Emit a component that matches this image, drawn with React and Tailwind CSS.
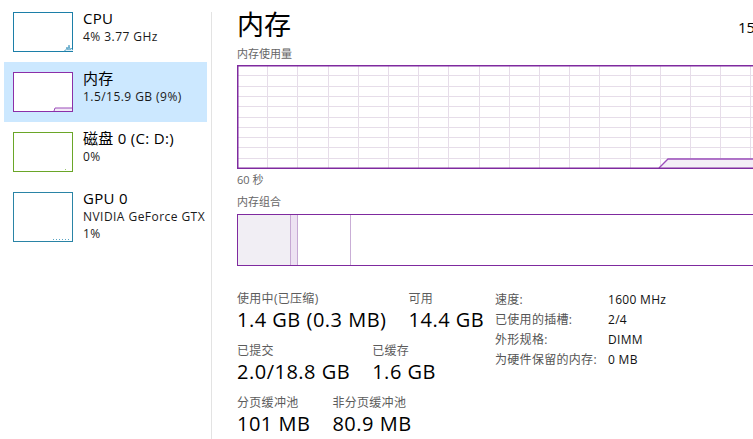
const font = { fontFamily: '"Open Sans", "Noto Sans CJK SC", sans-serif' };

function Thumb({ color, h = 40, children }) {
  return (
    <svg width="60" height={h} className="shrink-0 block">
      <rect x="0.5" y="0.5" width="59" height={h - 1} fill="#fff" stroke={color} strokeWidth="1" />
      {children}
    </svg>
  );
}

function SideItem({ thumb, title, lines, selected }) {
  return (
    <div
      className={`flex ml-[4px] w-[203px] pl-[9px] h-[60px] overflow-hidden ${selected ? "bg-[#cce8ff]" : ""}`}
    >
      <div className="mt-[10px]">{thumb}</div>
      <div className="ml-[10px] mt-[6px] whitespace-nowrap">
        <div className="text-[15px] leading-[20px] tracking-[0.3px] text-black">{title}</div>
        {lines.map((l) => (
          <div key={l} className="text-[12px] leading-[17px] tracking-[0.45px] text-[#1a1a1a]">
            {l}
          </div>
        ))}
      </div>
    </div>
  );
}

function UsageGraph() {
  const w = 580;
  const h = 104;
  const vx = Array.from({ length: 19 }, (_, i) => 30.2 * (i + 1));
  const hy = Array.from({ length: 9 }, (_, i) => 10.3 * (i + 1));
  return (
    <svg width={w} height={h} className="block">
      <rect x="0" y="0" width={w} height={h} fill="#fff" />
      {vx.map((x) => (
        <line key={x} x1={Math.round(x) + 0.5} y1="0" x2={Math.round(x) + 0.5} y2={h} stroke="#e6dde9" strokeWidth="1" />
      ))}
      {hy.map((y) => (
        <line key={y} x1="0" y1={Math.round(y) + 0.5} x2={w} y2={Math.round(y) + 0.5} stroke="#e6dde9" strokeWidth="1" />
      ))}
      <polygon points={`422,103 431,94 ${w},94 ${w},103`} fill="#f3edf6" />
      <polyline points={`422,103 431,94 ${w},94`} fill="none" stroke="#9b4dba" strokeWidth="1.3" />
      <rect x="0.75" y="0.75" width={w - 1.5} height={h - 1.5} fill="none" stroke="#7f2a9f" strokeWidth="1.5" />
    </svg>
  );
}

function Stat({ label, value }) {
  return (
    <div className="whitespace-nowrap">
      <div className="text-[12px] leading-[16px] tracking-[0.3px] text-[#5c5c5c]">{label}</div>
      <div className="text-[20px] leading-[26px] tracking-[0.5px] text-black">{value}</div>
    </div>
  );
}

export default function App() {
  const rows = [
    ["速度:", "1600 MHz"],
    ["已使用的插槽:", "2/4"],
    ["外形规格:", "DIMM"],
    ["为硬件保留的内存:", "0 MB"],
  ];
  return (
    <div className="w-[753px] h-[439px] overflow-hidden bg-white flex" style={font}>
      {/* sidebar */}
      <div className="w-[211px] shrink-0 pt-[2px]">
        <SideItem
          title="CPU"
          lines={["4% 3.77 GHz"]}
          thumb={
            <Thumb color="#1c7fa8">
              <polygon points="53,39 54,36 55,39 56,33 57,39 58,37 60,38 62,37 64,38 66,37 68,38 70,37 72,38 59,39" fill="#dbeef6" />
              <polyline points="51,39 53,38 54,35 55,38 56,33 57,38 58,36 60,38 62,37 64,38 66,37 68,38 70,37 72,38" fill="none" stroke="#4a9cc2" strokeWidth="0.8" />
            </Thumb>
          }
        />
        <SideItem
          selected
          title="内存"
          lines={["1.5/15.9 GB (9%)"]}
          thumb={
            <Thumb color="#8b2fa8">
              <polygon points="41,39 42,36 59,36 59,39" fill="#f3eaf6" />
              <polyline points="41,39 42,36 59,36" fill="none" stroke="#9b4dba" strokeWidth="1" />
            </Thumb>
          }
        />
        <SideItem
          title="磁盘 0 (C: D:)"
          lines={["0%"]}
          thumb={
            <Thumb color="#6aa628">
              <rect x="52" y="37" width="1" height="1" fill="#9cc76f" />
            </Thumb>
          }
        />
        <SideItem
          title="GPU 0"
          lines={["NVIDIA GeForce GTX", "1%"]}
          thumb={
            <Thumb color="#2a84a6" h={50}>
              <line x1="40" y1="47.5" x2="58" y2="47.5" stroke="#5aa5c4" strokeWidth="1" strokeDasharray="1 2" />
            </Thumb>
          }
        />
      </div>
      {/* divider */}
      <div className="w-px shrink-0 bg-[#e3e3e3] mt-[12px]" />
      {/* main */}
      <div className="pl-[25px] shrink-0 w-[620px]">
        <div className="flex items-end pt-[8px]">
          <div className="w-[501px] text-[27px] leading-[34px] text-black">内存</div>
          <div className="text-[15px] leading-[22px] text-black pb-[4px]">15.9 GB</div>
        </div>
        <div className="mt-[5px] text-[11px] leading-[14px] text-[#666]">内存使用量</div>
        <div className="mt-[4px]">
          <UsageGraph />
        </div>
        <div className="mt-[4px] text-[11px] leading-[14px] text-[#666]">60 秒</div>
        <div className="mt-[8px] text-[11px] leading-[14px] text-[#666]">内存组合</div>
        <div className="mt-[5px] w-[580px] h-[52px] border-[1.5px] border-[#7f2a9f] flex">
          <div className="w-[52px] bg-[#f1eef4]" />
          <div className="w-[8px] bg-[#ede2f2] border-x border-[#c6a8d3]" />
          <div className="w-[53px] border-r border-[#c9aed6]" />
          <div className="flex-1" />
        </div>
        {/* stats */}
        <div className="flex mt-[25px]">
          <div className="w-[258px] flex flex-col gap-y-[10px]">
            <div className="flex gap-[22px]">
              <Stat label="使用中(已压缩)" value="1.4 GB (0.3 MB)" />
              <Stat label="可用" value="14.4 GB" />
            </div>
            <div className="flex gap-[22px]">
              <Stat label="已提交" value="2.0/18.8 GB" />
              <Stat label="已缓存" value="1.6 GB" />
            </div>
            <div className="flex gap-[22px]">
              <Stat label="分页缓冲池" value="101 MB" />
              <Stat label="非分页缓冲池" value="80.9 MB" />
            </div>
          </div>
          <div className="-mt-[1px]">
            {rows.map(([k, v]) => (
              <div key={k} className="flex text-[12px] leading-[20px] tracking-[0.3px] whitespace-nowrap">
                <div className="w-[113px] text-[#555]">{k}</div>
                <div className="text-[#111]">{v}</div>
              </div>
            ))}
          </div>
        </div>
      </div>
    </div>
  );
}
